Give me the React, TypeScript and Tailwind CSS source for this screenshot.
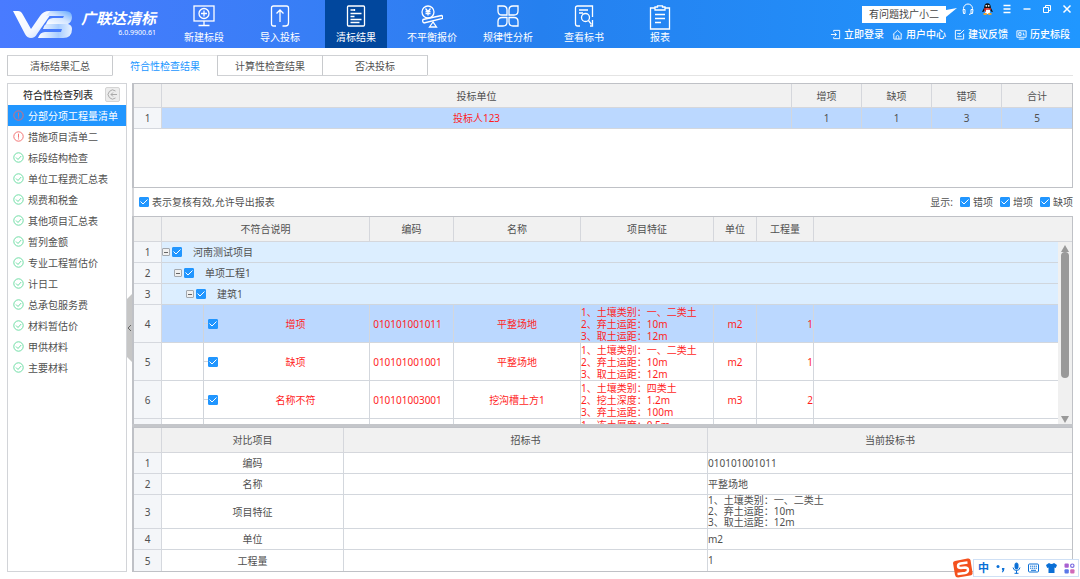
import React, { useState } from 'react';
import type { ReactNode } from 'react';

const navItems = ['新建标段', '导入投标', '清标结果', '不平衡报价', '规律性分析', '查看标书', '报表'];

const tabs = ['清标结果汇总', '符合性检查结果', '计算性检查结果', '否决投标'];

const checkList = [
  { name: '分部分项工程量清单', ok: false },
  { name: '措施项目清单二', ok: false },
  { name: '标段结构检查', ok: true },
  { name: '单位工程费汇总表', ok: true },
  { name: '规费和税金', ok: true },
  { name: '其他项目汇总表', ok: true },
  { name: '暂列金额', ok: true },
  { name: '专业工程暂估价', ok: true },
  { name: '计日工', ok: true },
  { name: '总承包服务费', ok: true },
  { name: '材料暂估价', ok: true },
  { name: '甲供材料', ok: true },
  { name: '主要材料', ok: true },
];

const groups = [
  { name: '河南测试项目', pad: 'pl-0' },
  { name: '单项工程1', pad: 'pl-3' },
  { name: '建筑1', pad: 'pl-6' },
];

const details = [
  { reason: '增项', code: '010101001011', name: '平整场地', features: ['1、土壤类别：一、二类土', '2、弃土运距：10m', '3、取土运距：12m'], unit: 'm2', qty: '1' },
  { reason: '缺项', code: '010101001001', name: '平整场地', features: ['1、土壤类别：一、二类土', '2、弃土运距：10m', '3、取土运距：12m'], unit: 'm2', qty: '1' },
  { reason: '名称不符', code: '010101003001', name: '挖沟槽土方1', features: ['1、土壤类别：四类土', '2、挖土深度：1.2m', '3、弃土运距：100m'], unit: 'm3', qty: '2' },
];

const compare = [
  { label: '编码', lines: ['010101001011'], height: 'h-[21px]' },
  { label: '名称', lines: ['平整场地'], height: 'h-[21px]' },
  { label: '项目特征', lines: ['1、土壤类别：一、二类土', '2、弃土运距：10m', '3、取土运距：12m'], height: 'h-[34px]' },
  { label: '单位', lines: ['m2'], height: 'h-[21px]' },
  { label: '工程量', lines: ['1'], height: 'h-[21px]' },
];

const headCell = 'border-r border-b border-[#d5d7dc] bg-[#f1f1f1] p-0 text-center font-normal last:border-r-0';
const numCell = 'border-r border-b border-[#d5d8de] bg-[#f4f6f9] p-0 text-center font-normal';
const cell = 'border-r border-b border-[#d3d7dd] p-0 text-center last:border-r-0';

const Logo = () => (
  <svg width="60" height="28" viewBox="0 0 60 28" aria-hidden="true">
    <defs>
      <linearGradient id="vLeft" x1="0" y1="0" x2="1" y2="1">
        <stop offset="0" stopColor="#ffffff" />
        <stop offset="0.6" stopColor="#f2f7ff" />
        <stop offset="1" stopColor="#b9d4ff" />
      </linearGradient>
      <linearGradient id="bTop" x1="0" y1="1" x2="1" y2="0">
        <stop offset="0" stopColor="#ffffff" />
        <stop offset="0.5" stopColor="#d3e5ff" />
        <stop offset="1" stopColor="#5fa6ff" />
      </linearGradient>
      <linearGradient id="bLow" x1="0" y1="0" x2="1" y2="0">
        <stop offset="0" stopColor="#ffffff" />
        <stop offset="0.6" stopColor="#a8cdff" />
        <stop offset="1" stopColor="#e6f1ff" />
      </linearGradient>
    </defs>
    <path d="M0 1h5q3 0 4.500 3l8.500 15 9-13q3.500-5 9-5h4L24 24q-2 4-6 4-4 0-6-4z" fill="url(#vLeft)" />
    <path d="M37 1h15q7 0 7 6 0 5-4 7H33q2-6 7-6h10l1-2H33z" fill="url(#bTop)" />
    <path d="M33 14h22q4 1 4 5 0 9-9 9H25q2-6 7-6h16l1-3H30q1-4 3-5z" fill="url(#bLow)" />
  </svg>
);

const navDrawings: ReactNode[] = [
  <>
    <rect x="1" y="1" width="20" height="15" />
    <circle cx="11" cy="8.500" r="5" />
    <path d="M11 5.500v6M8 8.500h6M11 16v4M5.500 20.500h11" />
  </>,
  <>
    <path d="M7 21H4.500q-2 0-2-2V3q0-2 2-2h13q2 0 2 2v15q0 3-3 3h-3" />
    <path d="M11 17V5M7.500 8.500L11 5l3.500 3.500" />
  </>,
  <>
    <rect x="2.500" y="1" width="17" height="20" rx="1" />
    <path d="M5.500 5h4M5.500 8.500h11M5.500 11.500h4M5.500 14.500h11M5.500 17.500h9M9.500 4v2" />
  </>,
  <>
    <circle cx="7" cy="7" r="6" />
    <path d="M4.500 3.500L7 6.500l2.500-3M4.500 6.500h5M4.500 8.500h5M7 6.500v4" />
    <path d="M2 14.500L20.500 10.500q1.500 0 1 3L3 18q-2-1-1-3.500z" />
    <path d="M12 17l-3.500 5h7z" />
  </>,
  <>
    <path d="M1 1h5q4 0 4 4v5H5q-4 0-4-4zM21 1h-5q-4 0-4 4v5h5q4 0 4-4zM1 21h5q4 0 4-4v-4.500H5q-4 0-4 4zM21 21h-5q-4 0-4-4v-4.500h5q4 0 4 4z" />
  </>,
  <>
    <path d="M7 21H4.500q-2 0-2-2V3q0-2 2-2h15v11M19.500 15v6H17" />
    <path d="M6 5h9M6 8h4" />
    <circle cx="12.500" cy="12.500" r="4" />
    <path d="M15.500 15.500l3 4" />
  </>,
  <>
    <path d="M6 3H1.500v21h19V3H16" />
    <path d="M6 5V2h2.500V.800h5V2H16v3zM6 9.500h10M6 13.500h10M6 17.500h6" />
  </>,
];

const NavIcon = ({ index }: { index: number }) => (
  <svg width="22" height="25" viewBox="0 0 22 25" fill="none" stroke="#fff" strokeWidth="1.300" aria-hidden="true">
    {navDrawings[index]}
  </svg>
);

const SmallIcon = ({ children, size = 'w-3 h-3' }: { children: ReactNode; size?: string }) => (
  <svg className={size} viewBox="0 0 12 12" fill="none" stroke="#fff" strokeWidth="1" aria-hidden="true">
    {children}
  </svg>
);

const links = [
  { name: '立即登录', icon: <path d="M4 3V1.500h6.500v9H4V9M1 6h6M5 4l2 2-2 2" /> },
  { name: '用户中心', icon: <path d="M1 6l5-4.500L11 6M2 5.500V11h8V5.500M4.500 11V8q1.500-2 3 0v3" /> },
  { name: '建议反馈', icon: <path d="M10.500 5v6h-9V1.500h6M3.500 5h3M3.500 8h5M6 6l5-5" /> },
  { name: '历史标段', icon: <path d="M1 2h10v7H1zM3 11h6M3 4h2.500v3H3zM8 4v2.500h1.500" /> },
];

const Tick = ({ label, id }: { label?: string; id: string }) => {
  const [checked, setChecked] = useState(true);
  return (
    <span className="inline-grid h-[10px] w-[10px] shrink-0">
      <input
        id={id}
        type="checkbox"
        aria-label={label}
        checked={checked}
        onChange={() => setChecked(!checked)}
        className="col-start-1 row-start-1 h-[10px] w-[10px] appearance-none rounded-[1px] border border-[#2196ff] bg-white checked:bg-[#2196ff]"
      />
      {checked && (
        <svg className="pointer-events-none col-start-1 row-start-1" width="10" height="10" viewBox="0 0 10 10" fill="none" stroke="#fff" strokeWidth="1">
          <path d="M1.500 4.500L4 7l4.500-4.500" />
        </svg>
      )}
    </span>
  );
};

const StatusIcon = ({ ok }: { ok: boolean }) => (
  <svg className="h-[11px] w-[11px] shrink-0" viewBox="0 0 11 11" fill="none" stroke={ok ? '#5fd99b' : '#f26666'} strokeWidth="0.900" aria-hidden="true">
    <circle cx="5.500" cy="5.500" r="4.700" />
    {ok ? <path d="M3 5.500l2 2L8.200 4" /> : <path d="M5.500 2.700v4M5.500 7.400v1" />}
  </svg>
);

const Header = () => (
  <header className="flex h-12 shrink-0 items-start bg-linear-to-r from-[#497bff] via-[#2580ef] to-[#2097ff] text-white">
    <div className="flex w-[173px] shrink-0 gap-[7px] pt-[10px] pl-[13px]">
      <Logo />
      <div className="flex w-[76px] flex-col items-end">
        <h1 className="text-[15px] leading-[16px] font-bold whitespace-nowrap italic">广联达清标</h1>
        <span className="text-[7px] leading-[14px]">6.0.9900.61</span>
      </div>
    </div>
    <nav className="flex gap-[14px]">
      {navItems.map((name, i) => (
        <button
          key={name}
          type="button"
          className={`flex h-12 w-[62px] flex-col items-center pt-[5px] ${i === 2 ? 'bg-[#01479d]' : ''}`}
        >
          <NavIcon index={i} />
          <span className="leading-[14px] whitespace-nowrap">{name}</span>
        </button>
      ))}
    </nav>
    <div className="ml-auto flex flex-col items-end gap-1">
      <div className="flex h-[23px] items-start pr-[7px]">
        <div className="mt-[6px] flex">
          <span className="h-[17px] bg-white px-[7px] leading-[17px] text-[#444]">有问题找广小二</span>
          <svg width="12" height="17" viewBox="0 0 12 17" aria-hidden="true">
            <path d="M0 4L11 2 0 11z" fill="#fff" />
          </svg>
        </div>
        <div className="flex items-center gap-2 pt-[3px] pl-1">
          <button type="button" aria-label="客服">
            <SmallIcon>
              <path d="M1.500 7V5.500a4.500 4.500 0 0 1 9 0V7M1 6.500h2v4H1.500zM11 6.500H9v4h1.500zM9.500 10.500L7 11.500" />
            </SmallIcon>
          </button>
          <button type="button" aria-label="QQ">
            <svg width="11" height="12" viewBox="0 0 11 12" aria-hidden="true">
              <ellipse cx="5.500" cy="5" rx="3.400" ry="4.700" fill="#111" />
              <path d="M2 5L0 9l2-.500zM9 5l2 4-2-.500z" fill="#111" />
              <ellipse cx="5.500" cy="8" rx="2.600" ry="3" fill="#fff" />
              <circle cx="4.300" cy="2.800" r="0.900" fill="#fff" />
              <circle cx="6.700" cy="2.800" r="0.900" fill="#fff" />
              <path d="M2 5.200h7v1.500H4v2H2.800V6.500H2z" fill="#e0281e" />
              <ellipse cx="3.200" cy="11" rx="2" ry="0.900" fill="#f5a623" />
              <ellipse cx="7.800" cy="11" rx="2" ry="0.900" fill="#f5a623" />
            </svg>
          </button>
          <button type="button" aria-label="菜单">
            <SmallIcon>
              <path d="M2.500 2.500h7M2.500 6h7M2.500 9.500h7" strokeWidth="1.400" />
            </SmallIcon>
          </button>
          <button type="button" aria-label="最小化">
            <SmallIcon>
              <path d="M2.500 6h7" strokeWidth="1.400" />
            </SmallIcon>
          </button>
          <button type="button" aria-label="还原">
            <SmallIcon>
              <path d="M2.500 4.500h5v5h-5zM4.500 4.500v-2h5v5h-2" />
            </SmallIcon>
          </button>
          <button type="button" aria-label="关闭">
            <SmallIcon>
              <path d="M2.500 2.500l7 7M9.500 2.500l-7 7" strokeWidth="1.500" />
            </SmallIcon>
          </button>
        </div>
      </div>
      <div className="flex gap-2 pr-[10px] leading-[14px] font-medium">
        {links.map((link) => (
          <a key={link.name} href="#" className="flex items-center gap-[3px] whitespace-nowrap">
            <SmallIcon size="w-[11px] h-[11px]">{link.icon}</SmallIcon>
            {link.name}
          </a>
        ))}
      </div>
    </div>
  </header>
);

const Sidebar = ({ selected, onSelect }: { selected: number; onSelect: (i: number) => void }) => (
  <aside className="flex w-[120px] shrink-0 flex-col border border-[#d2d4d8]">
    <div className="flex h-[21px] items-center justify-between pr-[6px] pl-[15px] text-[#333]">
      <h2 className="font-medium">符合性检查列表</h2>
      <button type="button" aria-label="收起列表" className="flex h-[15px] w-[15px] items-center justify-center rounded-[2px] border border-[#d4d4d4] bg-[#ececec]">
        <svg width="11" height="11" viewBox="0 0 11 11" fill="none" stroke="#aaa" strokeWidth="1">
          <path d="M8.500 2a4.500 4.500 0 1 0 0 7M10 5.500H4M6 3.500l-2 2 2 2" />
        </svg>
      </button>
    </div>
    <ul>
      {checkList.map((item, i) => (
        <li key={item.name}>
          <button
            type="button"
            onClick={() => onSelect(i)}
            className={`flex h-[21px] w-full items-center gap-1 pl-[5px] whitespace-nowrap ${selected === i ? 'bg-[#2196ff] text-white' : ''}`}
          >
            <StatusIcon ok={item.ok} />
            {item.name}
          </button>
        </li>
      ))}
    </ul>
  </aside>
);

const BidTable = () => (
  <section className="h-[105px] shrink-0 border border-l-2 border-[#bfc1c6]">
    <table className="w-full table-fixed border-separate border-spacing-0">
      <colgroup>
        <col className="w-7" />
        <col />
        <col className="w-[70px]" />
        <col className="w-[70px]" />
        <col className="w-[70px]" />
        <col className="w-[70px]" />
      </colgroup>
      <thead>
        <tr className="h-6">
          <th className={headCell}></th>
          {['投标单位', '增项', '缺项', '错项', '合计'].map((name) => (
            <th key={name} className={headCell}>{name}</th>
          ))}
        </tr>
      </thead>
      <tbody>
        <tr className="h-[21px] bg-[#bbd8ff]">
          <th className={numCell}>1</th>
          <td className={`${cell} text-[#ff1e1e]`}>投标人123</td>
          <td className={cell}>1</td>
          <td className={cell}>1</td>
          <td className={cell}>3</td>
          <td className={cell}>5</td>
        </tr>
      </tbody>
    </table>
  </section>
);

const Collapse = () => (
  <button type="button" aria-label="折叠" className="flex h-2 w-2 items-center justify-center rounded-[1px] border border-[#a3a8ae] bg-[#f0f0f0]">
    <span className="h-px w-1 bg-[#666]"></span>
  </button>
);

const DetailTable = () => (
  <section className="relative min-h-[100px] flex-1 overflow-hidden border-t border-r border-l-2 border-[#bfc1c6]">
    <table className="w-full table-fixed border-separate border-spacing-0">
      <colgroup>
        <col className="w-7" />
        <col className="w-52" />
        <col className="w-[84px]" />
        <col className="w-[127px]" />
        <col className="w-[133px]" />
        <col className="w-[43px]" />
        <col className="w-[57px]" />
        <col />
      </colgroup>
      <thead>
        <tr className="h-[25px]">
          <th className={headCell}></th>
          {['不符合说明', '编码', '名称', '项目特征', '单位', '工程量'].map((name) => (
            <th key={name} className={headCell}>{name}</th>
          ))}
          <th className={headCell}></th>
        </tr>
      </thead>
      <tbody>
        {groups.map((group, i) => (
          <tr key={group.name} className="h-[21px] bg-[#dceeff]">
            <th className={numCell}>{i + 1}</th>
            <td colSpan={7} className="border-b border-[#d0d6dd] p-0">
              <div className={`flex items-center ${group.pad}`}>
                <Collapse />
                <span className="flex pr-[11px] pl-[2px]">
                  <Tick id={`group-${i}`} label={group.name} />
                </span>
                {group.name}
              </div>
            </td>
          </tr>
        ))}
        {details.map((row, i) => (
          <tr key={row.code} className={`h-[38px] text-[#ff1e1e] ${i === 0 ? 'bg-[#bbd8ff]' : ''}`}>
            <th className={`${numCell} text-[#505050]`}>{i + 4}</th>
            <td className={cell}>
              <div className="flex h-[37px] items-center">
                <span className="h-full w-[42px] border-r border-[#d0d4da]"></span>
                <span className="h-px w-1 bg-[#d0d4da]"></span>
                <Tick id={`detail-${i}`} label={row.reason} />
                <span className="flex-1 pl-1">{row.reason}</span>
              </div>
            </td>
            <td className={`${cell} pr-2`}>{row.code}</td>
            <td className={cell}>{row.name}</td>
            <td className={`${cell} text-left leading-[12px] whitespace-nowrap`}>
              {row.features.map((line) => (
                <div key={line}>{line}</div>
              ))}
            </td>
            <td className={cell}>{row.unit}</td>
            <td className={`${cell} text-right`}>{row.qty}</td>
            <td className={cell}></td>
          </tr>
        ))}
        <tr className="h-[38px] text-[#ff1e1e]">
          <th className={numCell}></th>
          <td className={cell}>
            <span className="block h-[37px] w-[42px] border-r border-[#d0d4da]"></span>
          </td>
          <td className={cell}></td>
          <td className={cell}></td>
          <td className={`${cell} text-left align-top leading-[12px]`}>1、冻土厚度：0.5m</td>
          <td className={cell}></td>
          <td className={cell}></td>
          <td className={cell}></td>
        </tr>
      </tbody>
    </table>
    {/* scroll bar */}
    <div className="absolute top-[25px] right-0 bottom-0 flex w-[14px] flex-col items-center bg-[#f0f0f0] pt-[3px] pb-[1px]">
      <svg width="8" height="7" viewBox="0 0 8 7" fill="#999"><path d="M4 0l4 7H0z" /></svg>
      <div className="flex w-2 flex-1 flex-col">
        <div className="h-[77%] rounded-full bg-[#999]"></div>
      </div>
      <svg width="8" height="7" viewBox="0 0 8 7" fill="#999"><path d="M0 0h8L4 7z" /></svg>
    </div>
  </section>
);

const CompareTable = () => (
  <section className="shrink-0 border border-l-2 border-[#bfc1c6]">
    <table className="w-full table-fixed border-separate border-spacing-0">
      <colgroup>
        <col className="w-7" />
        <col className="w-[182px]" />
        <col />
        <col />
      </colgroup>
      <thead>
        <tr className="h-[25px]">
          <th className={headCell}></th>
          <th className={headCell}>对比项目</th>
          <th className={headCell}>招标书</th>
          <th className={headCell}>当前投标书</th>
        </tr>
      </thead>
      <tbody className="[&>tr:last-child>*]:border-b-0">
        {compare.map((row, i) => (
          <tr key={row.label} className={row.height}>
            <th className={numCell}>{i + 1}</th>
            <td className={cell}>{row.label}</td>
            <td className={cell}></td>
            <td className={`${cell} text-left leading-[11px]`}>
              {row.lines.map((line) => (
                <div key={line}>{line}</div>
              ))}
            </td>
          </tr>
        ))}
      </tbody>
    </table>
  </section>
);

const InputMethodBar = () => (
  <div className="fixed right-px bottom-0 flex items-center">
    <svg className="z-10 -mr-px" width="22" height="22" viewBox="0 0 22 22" aria-hidden="true">
      <path d="M3 4q-2 .500-2 2l2 12q.500 2.500 3 2.500l12-2q3-.500 2.500-3L18.500 3q-.500-2-3-1.500z" fill="#f4511e" />
      <path d="M15.500 5.500l-7 1q-2.500.500-2.500 2.500t3 2l4-.500q3 0 3 2.500t-3 3l-7.500 1" fill="none" stroke="#fff" strokeWidth="2.400" />
    </svg>
    <div className="flex h-[18px] items-center gap-[7px] border border-[#cfe0f5] bg-white pr-[3px] pl-1 text-[#0a6fd6]">
      <span className="text-[11px] leading-[14px] font-bold">中</span>
      <svg width="9" height="10" viewBox="0 0 9 10" fill="#0a6fd6"><circle cx="2" cy="3.500" r="1.500" /><path d="M6 5h2.500q0 3-2 4.500L5.800 9q1-1 .700-1.800Q5.500 6.500 6 5z" /></svg>
      <svg width="9" height="12" viewBox="0 0 9 12" fill="none" stroke="#0a6fd6" strokeWidth="1"><rect x="3" y="1" width="3" height="6" rx="1.500" fill="#0a6fd6" /><path d="M1 5.500q.500 3 3.500 3T8 5.500M4.500 8.500v3M2.500 11.300h4" /></svg>
      <svg width="11" height="10" viewBox="0 0 11 10" fill="none" stroke="#0a6fd6"><rect x="0.500" y="1" width="10" height="8" rx="1" /><path d="M2 3.200h7M2 5.200h7" strokeDasharray="1.300 0.600" /><path d="M3 7.300h5" /></svg>
      <svg width="11" height="10" viewBox="0 0 11 10" fill="#0a6fd6"><path d="M3 0q2.500 2 5 0l3 2-1.200 3-1.300-.500V10h-6V4.500L1.200 5 0 2z" /></svg>
      <svg width="11" height="11" viewBox="0 0 11 11"><rect x="0.500" y="0.500" width="4.300" height="4.300" rx="1" fill="#a860d0" /><circle cx="8.300" cy="2.700" r="1.700" fill="none" stroke="#7a6be0" strokeWidth="1.200" /><rect x="0.500" y="6.200" width="4.300" height="4.300" rx="1" fill="#5b78e8" /><rect x="6.200" y="6.200" width="4.300" height="4.300" rx="1" fill="#d06ab8" /></svg>
    </div>
  </div>
);

const App = () => {
  const [tab, setTab] = useState(1);
  const [selected, setSelected] = useState(0);

  return (
    <div className="flex h-screen flex-col overflow-hidden bg-white font-['Noto_Sans','Noto_Sans_CJK_SC',sans-serif] text-[10px] leading-[14px] text-[#505050]">
      <Header />
      <div className="flex shrink-0 px-[7px] py-[7px]">
        {tabs.map((name, i) => (
          <button
            key={name}
            type="button"
            onClick={() => setTab(i)}
            className={`-mr-px h-[21px] w-[106px] border-x border-y border-x-[#c8cacd] ${
              tab === i ? 'border-t-[#e8e8e8] border-b-white text-[#2196ff]' : 'border-y-[#cfd1d4]'
            }`}
          >
            {name}
          </button>
        ))}
        <div className="flex-1 border-b border-[#e4e4e4]"></div>
      </div>
      <div className="flex min-h-0 flex-1 px-[7px] pb-[7px]">
        <Sidebar selected={selected} onSelect={setSelected} />
        <button type="button" aria-label="收起侧栏" className="flex w-[5px] shrink-0 items-center">
          <svg width="5" height="68" viewBox="0 0 5 68" fill="none">
            <path d="M0 5L5 0v68l-5-5z" fill="#c6c6c6" />
            <path d="M4 31l-3 3 3 3" stroke="#666" />
          </svg>
        </button>
        <main className="flex min-w-0 flex-1 flex-col">
          <BidTable />
          <div className="flex h-7 shrink-0 items-center justify-between border-l-2 border-[#d5d6d9] pl-[5px]">
            <div className="flex items-center gap-[3px]">
              <Tick id="reviewed" />
              <label htmlFor="reviewed">表示复核有效,允许导出报表</label>
            </div>
            <div className="flex items-center gap-[7px]">
              <span>显示:</span>
              {['错项', '增项', '缺项'].map((name) => (
                <span key={name} className="flex items-center gap-[3px]">
                  <Tick id={`show-${name}`} />
                  <label htmlFor={`show-${name}`}>{name}</label>
                </span>
              ))}
            </div>
          </div>
          <DetailTable />
          <div className="h-[3px] shrink-0 bg-[#c4c6ca]"></div>
          <CompareTable />
        </main>
      </div>
      <InputMethodBar />
    </div>
  );
};

export default App;
